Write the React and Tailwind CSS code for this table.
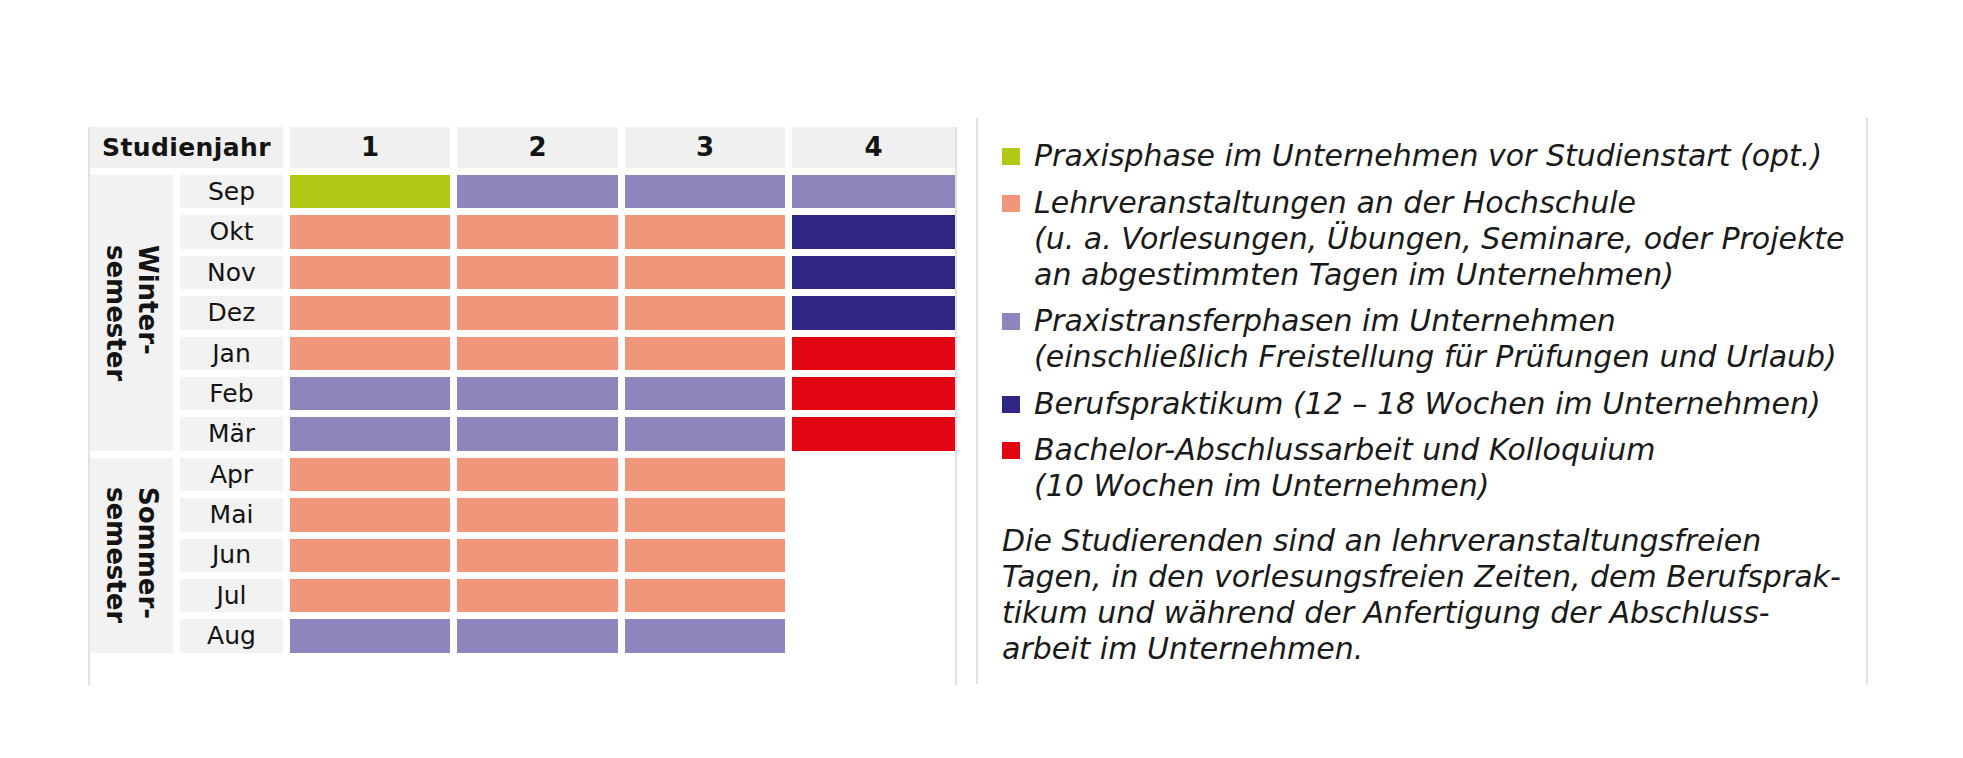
import React from "react";

const C = {
  G: "bg-[#b2c816]",
  S: "bg-[#f0977b]",
  P: "bg-[#8f84bb]",
  N: "bg-[#2f2783]",
  R: "bg-[#e20614]",
  E: "",
};

const rows = [
  ["Sep", "G", "P", "P", "P"],
  ["Okt", "S", "S", "S", "N"],
  ["Nov", "S", "S", "S", "N"],
  ["Dez", "S", "S", "S", "N"],
  ["Jan", "S", "S", "S", "R"],
  ["Feb", "P", "P", "P", "R"],
  ["Mär", "P", "P", "P", "R"],
  ["Apr", "S", "S", "S", "E"],
  ["Mai", "S", "S", "S", "E"],
  ["Jun", "S", "S", "S", "E"],
  ["Jul", "S", "S", "S", "E"],
  ["Aug", "P", "P", "P", "E"],
];

const legend = [
  { color: "bg-[#b2c816]", lines: ["Praxisphase im Unternehmen vor Studienstart (opt.)"] },
  {
    color: "bg-[#f0977b]",
    lines: [
      "Lehrveranstaltungen an der Hochschule",
      "(u. a. Vorlesungen, Übungen, Seminare, oder Projekte",
      "an abgestimmten Tagen im Unternehmen)",
    ],
  },
  {
    color: "bg-[#8f84bb]",
    lines: [
      "Praxistransferphasen im Unternehmen",
      "(einschließlich Freistellung für Prüfungen und Urlaub)",
    ],
  },
  { color: "bg-[#2f2783]", lines: ["Berufspraktikum (12 – 18 Wochen im Unternehmen)"] },
  {
    color: "bg-[#e20614]",
    lines: ["Bachelor-Abschlussarbeit und Kolloquium", "(10 Wochen im Unternehmen)"],
  },
];

const Schedule = () => (
  <div className="mt-[9px] h-[558px] border-x-2 border-[#e2e2e2]">
    <div className="grid grid-cols-[83px_103px_160px_161px_160px_163px] grid-rows-[41px_repeat(12,33.4px)] gap-[7px] text-[#141414]">
      <div className="col-span-2 bg-[#f0f0f0] flex items-center justify-center text-[25px] font-bold tracking-[0.4px]">
        Studienjahr
      </div>
      {[1, 2, 3, 4].map((n) => (
        <div key={n} className="bg-[#f0f0f0] flex items-center justify-center text-[26px] font-bold">
          {n}
        </div>
      ))}
      <div className="row-span-7 col-start-1 bg-[#f2f2f2] flex items-center justify-center">
        <span className="[writing-mode:vertical-rl] text-[26px] font-bold leading-[32px] text-left">
          Winter-
          <br />
          semester
        </span>
      </div>
      {rows.slice(0, 7).map((r) => (
        <Row key={r[0]} r={r} />
      ))}
      <div className="row-span-5 col-start-1 bg-[#f2f2f2] flex items-center justify-center">
        <span className="[writing-mode:vertical-rl] text-[26px] font-bold leading-[32px] text-left">
          Sommer-
          <br />
          semester
        </span>
      </div>
      {rows.slice(7).map((r) => (
        <Row key={r[0]} r={r} />
      ))}
    </div>
  </div>
);

const Row = ({ r }) => (
  <>
    <div className="col-start-2 bg-[#f2f2f2] flex items-center justify-center text-[25px]">{r[0]}</div>
    {r.slice(1).map((k, i) => (
      <div key={i} className={C[k]} />
    ))}
  </>
);

const Legend = () => (
  <div className="ml-[19px] w-[892px] h-[566px] border-x-2 border-[#e2e2e2] pl-[24px] pt-[20px] text-[#1a1a1a] italic text-[30px] leading-[36px]">
    <div className="flex flex-col gap-[10.5px]">
      {legend.map((item, i) => (
        <div key={i} className="flex items-start gap-[14px]">
          <span className={`mt-[10px] w-[18px] h-[17px] shrink-0 ${item.color}`} />
          <div className="whitespace-nowrap">
            {item.lines.map((l, j) => (
              <div key={j}>{l}</div>
            ))}
          </div>
        </div>
      ))}
      <div className="mt-[8px] whitespace-nowrap">
        <div>Die Studierenden sind an lehrveranstaltungsfreien</div>
        <div>Tagen, in den vorlesungsfreien Zeiten, dem Berufsprak-</div>
        <div>tikum und während der Anfertigung der Abschluss-</div>
        <div>arbeit im Unternehmen.</div>
      </div>
    </div>
  </div>
);

export default function App() {
  return (
    <div className="w-[1963px] h-[758px] bg-white pt-[118px] pl-[88px] flex items-start font-['DejaVu_Sans',sans-serif]">
      <Schedule />
      <Legend />
    </div>
  );
}
